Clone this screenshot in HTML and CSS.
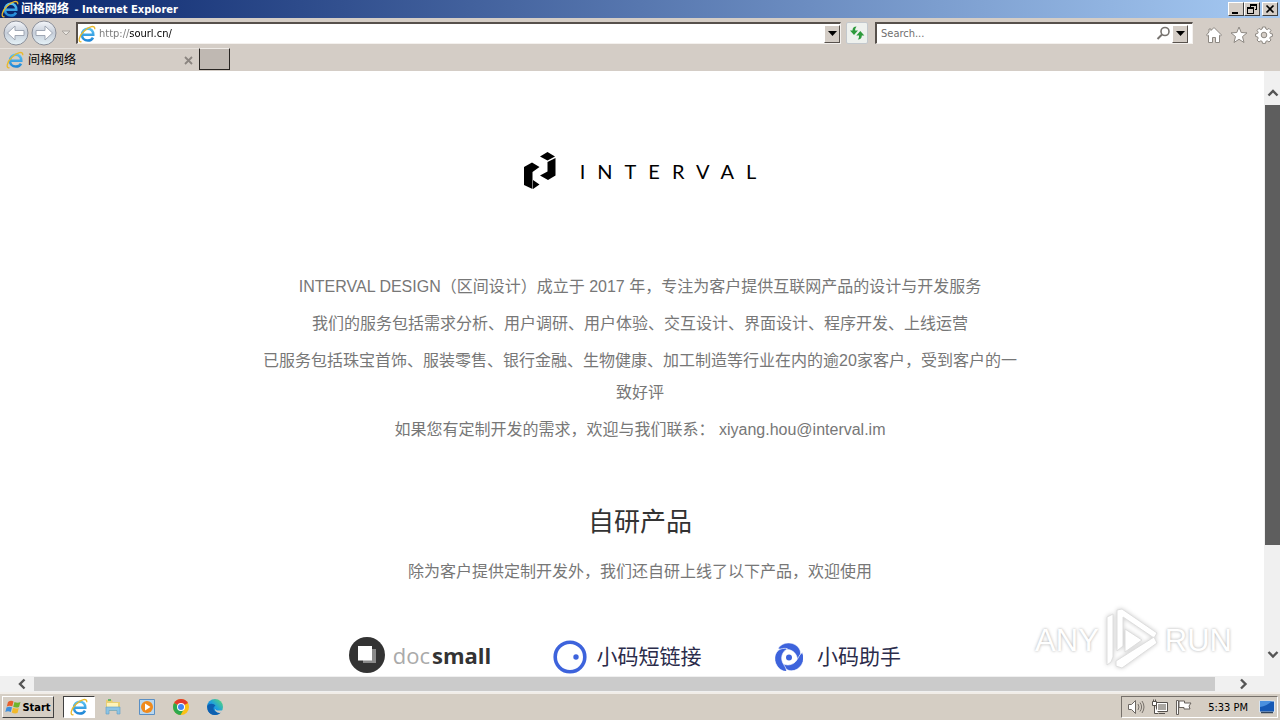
FILE: index.html
```html
<!DOCTYPE html>
<html lang="zh-CN">
<head>
<meta charset="utf-8">
<title>间格网络 - Internet Explorer</title>
<link rel="stylesheet" href="styles.css">
</head>
<body>
<svg class="defs" aria-hidden="true">
  <defs>
    <linearGradient id="ieBlue" gradientUnits="userSpaceOnUse" x1="0" y1="3" x2="0" y2="16"><stop offset="0" stop-color="#5cc4f3"/><stop offset="1" stop-color="#1f86d6"/></linearGradient>
    <linearGradient id="navFill" x1="0" y1="0" x2="0" y2="1"><stop offset="0" stop-color="#f4f6fa"/><stop offset=".5" stop-color="#c6ced9"/><stop offset="1" stop-color="#e6f3f8"/></linearGradient>
    <linearGradient id="edge" x1="0" y1="1" x2="1" y2="0"><stop offset="0" stop-color="#0c59a4"/><stop offset=".5" stop-color="#1b9de2"/><stop offset="1" stop-color="#5ee06a"/></linearGradient>
    <symbol id="ie" viewBox="0 0 18 18">
      <path d="M4.500 9.800H15.300C15.500 6 13 3.700 9.900 3.700C6.500 3.700 4 6.200 4 9.700C4 13.200 6.400 15.500 9.900 15.500C12.300 15.500 14.100 14.500 15 12.600" fill="none" stroke="url(#ieBlue)" stroke-width="2.500"/>
      <path d="M3.500 16.700C-.5 17.600 .8 11 6 6.200C11 1.600 17.300-.6 16.800 4.200" fill="none" stroke="#e9b92c" stroke-width="1.300"/>
    </symbol>
  </defs>
</svg>

<header class="titlebar">
  <svg class="icon18"><use href="#ie"/></svg>
  <h1 class="titlebar-text"><span class="site-name">间格网络</span> - Internet Explorer</h1>
  <div class="window-buttons">
    <button class="win-btn" aria-label="Minimize"><svg viewBox="0 0 14 12"><path d="M3 9h6v2H3z"/></svg></button>
    <button class="win-btn" aria-label="Restore"><svg viewBox="0 0 14 12"><path d="M5 1h7v6h-2V6h1V3H6v1H5zM2 4h7v7H2zM3 6v4h5V6z" fill-rule="evenodd"/></svg></button>
    <button class="win-btn win-close" aria-label="Close"><svg viewBox="0 0 14 12"><path d="M3.500 2.500l7 7M10.500 2.500l-7 7" stroke="#000" stroke-width="1.700"/></svg></button>
  </div>
</header>

<nav class="navbar">
  <div class="history">
    <button class="round-btn" aria-label="Back"><svg viewBox="0 0 26 26"><circle cx="13" cy="13" r="12" fill="url(#navFill)" stroke="#8b8f99"/><path d="M4.500 13l7.500-7v4.500h9v5h-9V20z" fill="#fff" stroke="#9fa7b4"/></svg></button>
    <button class="round-btn" aria-label="Forward"><svg viewBox="0 0 26 26"><circle cx="13" cy="13" r="12" fill="url(#navFill)" stroke="#8b8f99"/><path d="M21.500 13L14 6v4.500H5v5h9V20z" fill="#fff" stroke="#9fa7b4"/></svg></button>
    <button class="recent-btn" aria-label="Recent pages"><svg viewBox="0 0 10 6"><path d="M1 1h8L5 5z" fill="#e8e5e0" stroke="#aaa5a0"/></svg></button>
  </div>
  <div class="field address">
    <svg class="icon18"><use href="#ie"/></svg>
    <input class="url" type="text" aria-label="Address" value="http://sourl.cn/">
    <button class="drop-btn" aria-label="Show address list"><svg viewBox="0 0 9 5"><path d="M0 0h9L4.500 5z"/></svg></button>
  </div>
  <button class="refresh-btn" aria-label="Refresh"><svg viewBox="0 0 18 18"><path d="M8.500 2.500Q4.500 2.500 4.500 6.500H2L6 11l4-4.500H7.200Q7 4.500 8.500 2.500z" fill="#2d9a3c"/><path d="M9.800 15.500Q13.800 15.500 13.800 11.500H16.300L12.300 7l-4 4.500h2.800Q11.300 13.500 9.800 15.500z" fill="#2d9a3c"/></svg></button>
  <div class="field search">
    <input class="query" type="text" aria-label="Search" placeholder="Search...">
    <button class="find-btn" aria-label="Search"><svg viewBox="0 0 15 15"><circle cx="9" cy="5.500" r="4" fill="none" stroke="#77736f" stroke-width="1.600"/><path d="M6 8.500L1.500 13" stroke="#77736f" stroke-width="2"/></svg></button>
    <button class="drop-btn" aria-label="Search options"><svg viewBox="0 0 9 5"><path d="M0 0h9L4.500 5z"/></svg></button>
  </div>
  <div class="tools">
    <button class="tool-btn" aria-label="Home"><svg viewBox="0 0 18 18"><path d="M9 1.500l7.500 7.500-1 1-1-.7V16.500h-4v-5h-3v5h-4V9.300l-1 .7-1-1L4 6V3h2v1.500z" fill="#fff" stroke="#8d8882"/></svg></button>
    <button class="tool-btn" aria-label="Favorites"><svg viewBox="0 0 18 18"><path d="M9 1l2.200 5.500 5.800.4-4.500 3.700 1.500 5.900L9 13.300l-5 3.200 1.500-5.900L1 6.900l5.800-.4z" fill="#fff" stroke="#8d8882"/></svg></button>
    <button class="tool-btn" aria-label="Tools"><svg viewBox="0 0 18 18"><path d="M7.500 1h3l.4 2 1.300.6 1.800-1.200 2 2-1.200 1.800.6 1.300 2 .4v2.500l-2 .5-.6 1.300 1.200 1.800-2 2-1.800-1.200-1.300.6-.4 2h-3l-.4-2-1.300-.6L4 16l-2-2 1.200-1.800-.6-1.300-2-.5V7.900l2-.4.600-1.300L2 4.400l2-2 1.800 1.200L7.100 3z" fill="#fff" stroke="#8d8882"/><circle cx="9" cy="9" r="2.800" fill="#d4cdc6" stroke="#8d8882"/></svg></button>
  </div>
</nav>

<div class="tabs">
  <div class="tab">
    <svg class="icon18"><use href="#ie"/></svg>
    <span class="tab-name">间格网络</span>
    <button class="tab-close" aria-label="Close tab"><svg viewBox="0 0 9 9"><path d="M1 1l7 7M8 1L1 8" stroke="#8b8580" stroke-width="1.800"/></svg></button>
  </div>
  <button class="new-tab" aria-label="New tab"></button>
</div>

<div class="viewport">
  <main class="page">
    <div class="page-inner">
      <div class="brand">
        <svg class="brand-mark" viewBox="0 0 32 38"><path d="M0 15L8 10.500L15.500 15L8.500 20V37L0 33zM9 28l6.500 4.500L9 37zM16 4.500L23.500 0L31 4.500L23.500 8.500zM31.500 6v17.500L24 28l-8-4.500 7.500-4V10z"/></svg>
        <span class="brand-name">INTERVAL</span>
      </div>
      <section class="intro">
        <p>INTERVAL DESIGN（区间设计）成立于 2017 年，专注为客户提供互联网产品的设计与开发服务</p>
        <p>我们的服务包括需求分析、用户调研、用户体验、交互设计、界面设计、程序开发、上线运营</p>
        <p>已服务包括珠宝首饰、服装零售、银行金融、生物健康、加工制造等行业在内的逾20家客户，受到客户的一致好评</p>
        <p>如果您有定制开发的需求，欢迎与我们联系： xiyang.hou@interval.im</p>
      </section>
      <section class="own">
        <h2>自研产品</h2>
        <p>除为客户提供定制开发外，我们还自研上线了以下产品，欢迎使用</p>
        <div class="products">
          <a class="product docsmall" href="#docsmall">
            <svg class="doc-icon" viewBox="0 0 36 36"><circle cx="18" cy="18" r="18" fill="#333"/><path d="M14 12h13v14H14z" fill="#8a8a8a"/><path d="M9 9h14v14.500H9z" fill="#fff"/></svg>
            <span class="doc-name"><span class="doc-light">doc</span><b>small</b></span>
          </a>
          <a class="product short-link" href="#link">
            <svg class="link-icon" viewBox="0 0 34 34"><circle cx="17" cy="17" r="14.800" fill="none" stroke="#3d63dc" stroke-width="3.600"/><circle cx="23" cy="17" r="2.700" fill="#3d63dc"/></svg>
            <span>小码短链接</span>
          </a>
          <a class="product helper" href="#helper">
            <svg class="helper-icon" viewBox="0 0 28 28"><g fill="#3d63dc"><circle cx="14" cy="14.500" r="3"/><g stroke="#fff" stroke-width=".6"><path id="blade" d="M3 5.500C7.500-2 20-2 24.500 6C26.500 10 25.500 14 22.500 17.500C22.300 11.500 18.500 7.400 13.500 6.600C9.500 6 6.500 7.200 3 5.500z"/><use href="#blade" transform="rotate(120 14 14.500)"/><use href="#blade" transform="rotate(240 14 14.500)"/></g></g></svg>
            <span>小码助手</span>
          </a>
        </div>
      </section>
    </div>
    <div class="watermark">
      <span>ANY</span>
      <svg viewBox="0 0 56 66"><g fill="#fff" stroke="#dedede" stroke-width="1" stroke-linejoin="round"><path d="M3 9l6-3v43l-2 5-4 3z"/><path d="M13 2l5-1 35 24-3 5-31-21v29l-6 5z"/><path d="M53 35L18 60l-6-2v-5l38-24z"/><path d="M21 21l17 11-17 12z"/></g></svg>
      <span>RUN</span>
    </div>
  </main>
  <div class="vscroll">
    <button class="arrow" aria-label="Scroll up"><svg viewBox="0 0 12 12"><path d="M1.500 8.500L6 4l4.500 4.500"/></svg></button>
    <div class="vthumb"></div>
    <button class="arrow down" aria-label="Scroll down"><svg viewBox="0 0 12 12"><path d="M1.500 4L6 8.500L10.500 4"/></svg></button>
  </div>
</div>
<div class="hscroll">
  <button class="arrow" aria-label="Scroll left"><svg viewBox="0 0 12 12"><path d="M8.500 1.500L4 6l4.500 4.500"/></svg></button>
  <div class="hthumb"></div>
  <button class="arrow" aria-label="Scroll right"><svg viewBox="0 0 12 12"><path d="M4 1.500L8.500 6L4 10.500"/></svg></button>
</div>

<footer class="taskbar">
  <button class="start"><svg viewBox="0 0 17 16"><path d="M3 3q3-2 5.500-.5L7.300 7.300Q4.500 6 1.800 7.500z" fill="#e8602c"/><path d="M9.500 3q3 1.500 6 0L14 8q-3 1.200-5.800-.3z" fill="#6fb52c"/><path d="M1.500 8.500q2.500-1.500 5.500-.2L5.800 13Q3 11.500.3 13z" fill="#3f8fdc"/><path d="M8 8.700q3 1.300 5.800.2L12.500 14q-3 1-5.700-.5z" fill="#f2b92a"/></svg>Start</button>
  <div class="pinned">
    <button class="task active" aria-label="Internet Explorer"><svg viewBox="0 0 18 18"><use href="#ie"/></svg></button>
    <button class="task" aria-label="Explorer"><svg viewBox="0 0 18 18"><path d="M2 2h6l1 2h7v9H2z" fill="#e9cf73"/><path d="M3 5h11v4H3z" fill="#fff3b8"/><path d="M4 1h3v2H4z" fill="#6bb56b"/><path d="M2 9h14v7h-3v-3.500H5V16H2z" fill="#8cc4e4" stroke="#5f9fc6" stroke-width=".6"/></svg></button>
    <button class="task" aria-label="Media Player"><svg viewBox="0 0 18 18"><path d="M1.500 1.500h15v15h-15z" fill="#b9d7ef" stroke="#5a8fc4"/><circle cx="9" cy="9" r="6" fill="#f08a1c"/><path d="M7 5.500L12.500 9L7 12.500z" fill="#fff"/></svg></button>
    <button class="task" aria-label="Chrome"><svg viewBox="0 0 18 18"><circle cx="9" cy="9" r="8" fill="#fbc116"/><path d="M9 9L2.070 5A8 8 0 0 1 15.930 5z" fill="#e33b2e"/><path d="M2.070 5A8 8 0 0 0 8.500 17L12 11L9 9z" fill="#2da94f"/><path d="M9 5h6.930L9 3z" fill="#e33b2e"/><circle cx="9" cy="9" r="4" fill="#fff"/><circle cx="9" cy="9" r="3" fill="#4285f4"/></svg></button>
    <button class="task" aria-label="Edge"><svg viewBox="0 0 18 18"><circle cx="9" cy="9" r="8" fill="url(#edge)"/><path d="M1.200 8C3 5 8 4.800 9.500 8C7 8.500 6.500 12 10 14C12 15 14.500 14.500 15.500 13.500C13 18 5 18.500 2 13z" fill="#0d5fb0"/><path d="M9.500 8.500C8 10.500 9.500 12.500 12.500 12.500L17.500 12.500L16 14.500C12 16 7 13 9.500 8.500z" fill="#d4cdc6"/></svg></button>
  </div>
  <div class="tray">
    <svg viewBox="0 0 18 16"><path d="M1.500 5.500h3l4-4v13l-4-4h-3z" fill="#fff" stroke="#6c6762"/><path d="M11 5q2 3 0 6M13 3.500q3.200 4.500 0 9M15 2q4 6 0 12" fill="none" stroke="#77716b"/></svg>
    <svg viewBox="0 0 18 16"><path d="M5.500 3.500h11v9h-11z" fill="#fff" stroke="#55514d"/><path d="M7 5h8v6H7z" fill="#aaa7a2"/><path d="M8 14.500h6" stroke="#55514d"/><path d="M1.500 2.500h4v4h-4zM3.500 6.500v8h4M2.500 2.500v-2M4.500 2.500v-2" fill="#fff" stroke="#55514d"/></svg>
    <svg viewBox="0 0 18 16"><path d="M1.500 1.500h2v14h-2z" fill="#fff" stroke="#66615c"/><path d="M4 2h5.500v2H16l-2 3 1 3H9V8.500H4z" fill="#fff" stroke="#66615c"/></svg>
    <time>5:33 PM</time>
    <svg viewBox="0 0 18 16"><path d="M1.500 2h15v11h-15z" fill="#1659b5" stroke="#d8e4f0"/><path d="M2 8q7-1 12-6H2z" fill="#4a90df"/><path d="M3 13.500h12" stroke="#31445c" stroke-width="1.500"/></svg>
  </div>
</footer>
</body>
</html>
```
FILE: styles.css
```css
* { box-sizing: border-box; }

body {
  margin: 0;
  height: 100vh;
  display: flex;
  flex-direction: column;
  overflow: hidden;
  background: #d4cdc6;
  color: #000;
  font-family: "DejaVu Sans Condensed", "Noto Sans CJK SC", sans-serif;
  font-size: 11px;
}

button {
  margin: 0;
  padding: 0;
  border: 0;
  background: none;
  font: inherit;
  color: inherit;
  display: flex;
  align-items: center;
  justify-content: center;
}

input {
  min-width: 0;
  padding: 0;
  border: 0;
  outline: 0;
  background: none;
  font: inherit;
}

svg { display: block; flex: none; }
.defs { position: absolute; width: 0; height: 0; }
.icon18 { width: 18px; height: 18px; }

/* Title bar */
.titlebar {
  flex: none;
  height: 18px;
  padding: 0 2px 0 1px;
  display: flex;
  align-items: center;
  background: linear-gradient(90deg, #08246b, #a6caf3);
}
.titlebar-text {
  flex: 1;
  margin: 0 0 0 2px;
  color: #fff;
  font-size: 11px;
  line-height: 18px;
  font-weight: bold;
}
.site-name { font-size: 12px; margin-right: 2px; }
.window-buttons { display: flex; }
.win-btn {
  width: 16px;
  height: 14px;
  background: #d4cdc6;
  border: 1px solid;
  border-color: #fff #404040 #404040 #fff;
}
.win-btn svg { width: 14px; height: 12px; }
.win-close { margin-left: 2px; }

/* Navigation row */
.navbar {
  flex: none;
  height: 30px;
  padding: 0 7px 0 2px;
  display: flex;
  align-items: center;
}
.history { display: flex; align-items: center; width: 74px; }
.round-btn { width: 28px; }
.round-btn svg { width: 26px; height: 26px; }
.recent-btn { width: 16px; }
.recent-btn svg { width: 10px; height: 6px; }
.field {
  height: 22px;
  display: flex;
  align-items: center;
  background: #fff;
  border: 1px solid;
  border-width: 2px 1px 1px 2px;
  border-color: #57514c #f4f1ee #f4f1ee #57514c;
}
.address { flex: 1; }
.url {
  flex: 1;
  height: 18px;
  margin-left: 3px;
  color: transparent;
  background: linear-gradient(90deg, #777 30px, #000 30px);
  -webkit-background-clip: text;
  background-clip: text;
}
.drop-btn {
  width: 16px;
  height: 18px;
  background: #d4cdc6;
  border: 1px solid;
  border-color: #fff #57514c #57514c #fff;
}
.drop-btn svg { width: 9px; height: 5px; }
.refresh-btn {
  width: 22px;
  height: 22px;
  margin: 0 7px 0 5px;
  background: #eef1ee;
  border: 1px solid #c3c8cd;
  border-radius: 2px;
}
.refresh-btn svg { width: 18px; height: 18px; }
.search { width: 318px; padding-right: 4px; }
.query { flex: 1; padding-left: 4px; }
.query::placeholder { color: #6f6f6f; opacity: 1; }
.find-btn { width: 18px; }
.find-btn svg { width: 15px; height: 15px; }
.tools { display: flex; gap: 7px; margin-left: 12px; padding-top: 3px; }
.tool-btn svg { width: 18px; height: 18px; }

/* Tab row */
.tabs { flex: none; height: 23px; display: flex; }
.tab {
  width: 199px;
  padding: 0 6px;
  display: flex;
  align-items: center;
  border-top: 1px solid #e6e1dc;
}
.tab-name { flex: 1; margin-left: 4px; font-size: 12px; line-height: 16px; }
.tab-close svg { width: 9px; height: 9px; }
.new-tab {
  width: 31px;
  height: 22px;
  background: #bfb8b2;
  border: 1px solid;
  border-color: #efebe7 #282522 #282522;
}

/* Page area */
.viewport { flex: 1; min-height: 0; display: flex; }
.page {
  position: relative;
  flex: 1;
  overflow: hidden;
  background: #fff;
}
.page-inner {
  width: calc(100% + 16px);
  padding-top: 80px;
  display: flex;
  flex-direction: column;
  align-items: center;
  font-family: "Liberation Sans", "Noto Sans CJK SC", sans-serif;
  font-size: 16px;
  line-height: 32px;
  color: #777;
  text-align: center;
}
.page-inner p { margin: 0 0 5px; }
.brand {
  display: flex;
  align-items: center;
  gap: 24px;
  height: 40px;
  padding-left: 12px;
  color: #000;
}
.brand-mark { width: 32px; height: 38px; }
.brand-name {
  font-family: Lato, sans-serif;
  font-weight: 400;
  font-size: 20px;
  letter-spacing: 12px;
}
.intro { width: 760px; max-width: 100%; margin-top: 80px; }
.own h2 {
  margin: 52px 0 15px;
  color: #333;
  font-size: 26px;
  line-height: 38px;
  font-weight: normal;
}
.products {
  display: grid;
  grid-template-columns: repeat(3, 210px);
  justify-content: center;
  align-items: center;
  margin: 47px 20px 0 0;
}
.product {
  display: flex;
  align-items: center;
  justify-content: center;
  gap: 10px;
  height: 40px;
  color: #2b2c4b;
  font-size: 21px;
  text-decoration: none;
}
.docsmall { gap: 8px; color: #333; }
.doc-icon { width: 36px; height: 36px; }
.doc-name { font-family: "Open Sans", sans-serif; font-size: 22px; }
.doc-light { margin-right: 2px; color: #aaa; }
.short-link, .helper { padding: 4px 4px 0 0; }
.short-link { padding-right: 6px; }
.link-icon { width: 34px; height: 34px; }
.helper { gap: 14px; }
.helper-icon { width: 28px; height: 28px; }

.watermark {
  position: absolute;
  right: 32px;
  bottom: 2px;
  display: flex;
  align-items: center;
  gap: 5px;
  color: #fff;
  font-family: "Liberation Sans Narrow", "Liberation Sans", sans-serif;
  font-size: 31px;
  text-shadow: 0 0 3px #aaa;
}
.watermark svg { width: 56px; height: 66px; filter: drop-shadow(0 0 2px #ccc); }

/* Scroll bars */
.arrow svg { width: 12px; height: 12px; fill: none; stroke: #555; stroke-width: 2.4px; }
.vscroll {
  flex: none;
  width: 16px;
  padding: 14px 0 12px 1px;
  display: flex;
  flex-direction: column;
  background: #f0f0f0;
}
.vscroll .arrow { height: 20px; padding-bottom: 4px; }
.vthumb { flex: none; height: 76%; min-height: 20px; background: #5e5e5e; }
.vscroll .down { margin-top: auto; padding-bottom: 0; }
.hscroll {
  flex: none;
  height: 16px;
  padding: 1px 29px 1px 13px;
  display: flex;
  background: #f0f0f0;
}
.hthumb { flex: 1; margin: 0 19px 0 4px; background: #cbcbcb; }
.hscroll .arrow { width: 17px; }

/* Taskbar */
.taskbar {
  flex: none;
  height: 28px;
  padding: 2px 2px 2px;
  display: flex;
  align-items: center;
  border-top: 2px solid #f1ede8;
  background: #d5cec4;
}
.start {
  width: 52px;
  height: 22px;
  font-weight: bold;
  font-size: 11px;
  border: 1px solid;
  border-color: #fff #404040 #404040 #fff;
}
.start svg { width: 17px; height: 16px; }
.pinned { flex: 1; display: flex; gap: 2px; margin-left: 9px; }
.task { width: 32px; height: 22px; }
.task svg { width: 18px; height: 18px; }
.active {
  background: #fff;
  border: 1px solid;
  border-color: #404040 #fff #fff #404040;
}
.tray {
  height: 22px;
  padding: 0 1px 0 5px;
  display: flex;
  align-items: center;
  gap: 6px;
  border: 1px solid;
  border-color: #77716b #fff #fff #77716b;
}
.tray svg { width: 18px; height: 16px; }
.tray time { margin: 0 4px 0 9px; }
```
